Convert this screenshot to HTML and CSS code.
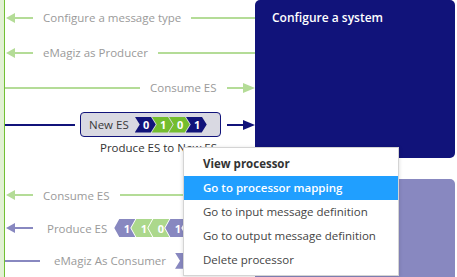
FILE: index.html
```html
<!DOCTYPE html>
<html>
<head>
<meta charset="utf-8">
<link rel="stylesheet" href="styles.css">
</head>
<body>
<div class="page">
  <div class="rail"></div>
  <div class="content">
    <div class="section top">
      <div class="lanes">
        <div class="row">
          <span class="head-left light"></span><span class="line short light-bg"></span>
          <span class="label">Configure a message type</span>
          <span class="line grow light-bg"></span>
        </div>
        <div class="row">
          <span class="head-left light"></span><span class="line short light-bg"></span>
          <span class="label">eMagiz as Producer</span>
          <span class="line grow light-bg"></span>
        </div>
        <div class="row">
          <span class="line w135 light-bg"></span>
          <span class="label">Consume ES</span>
          <span class="line grow light-bg"></span><span class="head-right light"></span>
        </div>
        <div class="row row-es">
          <span class="line w70 navy-bg"></span>
          <div class="es-box">
            <span class="es-name">New ES</span>
            <div class="chevrons">
              <span class="chev navy-bg">0</span>
              <span class="chev green-bg">1</span>
              <span class="chev green-bg">0</span>
              <span class="chev navy-bg last">1</span>
            </div>
          </div>
          <span class="line grow navy-bg gapl"></span><span class="head-right navy"></span>
        </div>
        <div class="caption">Produce ES to New ES</div>
      </div>
      <div class="system navy-box">Configure a system</div>
    </div>
    <div class="section bottom">
      <div class="lanes">
        <div class="row">
          <span class="head-left light"></span><span class="line short light-bg"></span>
          <span class="label">Consume ES</span>
          <span class="line grow light-bg"></span>
        </div>
        <div class="row">
          <span class="head-left purple"></span><span class="line short purple-bg"></span>
          <span class="label wide">Produce ES</span>
          <div class="chevrons rev">
            <span class="rchev purple-bg">1</span>
            <span class="rchev lgreen-bg">1</span>
            <span class="rchev lgreen-bg">0</span>
            <span class="rchev purple-bg">1</span>
          </div>
        </div>
        <div class="row">
          <span class="line w35 purple-bg"></span>
          <span class="label wide">eMagiz As Consumer</span>
          <span class="chev purple-bg solo">1</span>
        </div>
      </div>
      <div class="system purple-box"></div>
    </div>
  </div>
  <ul class="menu">
    <li class="title">View processor</li>
    <li class="active">Go to processor mapping</li>
    <li>Go to input message definition</li>
    <li>Go to output message definition</li>
    <li>Delete processor</li>
  </ul>
</div>
</body>
</html>
```
FILE: styles.css
```css
html, body {
  margin: 0;
  padding: 0;
  background: #fff;
}
body {
  width: 457px;
  height: 277px;
  overflow: hidden;
  font-family: "Open Sans", "Noto Sans", sans-serif;
  font-size: 11.5px;
}
.page {
  position: relative;
  display: flex;
  height: 277px;
}
.rail {
  width: 4px;
  background: #e2f1d4;
  border-right: 1px solid #72c034;
  flex: none;
}
.content {
  display: flex;
  flex-direction: column;
  width: 452px;
}
.section {
  display: flex;
}
.section.top {
  height: 158px;
}
.section.bottom {
  margin-top: 21px;
  height: 98px;
}
.lanes {
  width: 250px;
  display: flex;
  flex-direction: column;
}
.system {
  width: 200px;
  border-radius: 5px;
}
.navy-box {
  background: #11137a;
  color: #fff;
  padding: 9px 17px;
  box-sizing: border-box;
  font-size: 12px;
  font-weight: 600;
}
.purple-box {
  background: #8888c0;
  border-radius: 5px 5px 0 0;
  height: 100px;
}
.row {
  height: 35px;
  display: flex;
  align-items: center;
}
.row-es {
  height: 37px;
  margin-top: 1px;
}
.line {
  height: 2px;
  flex: none;
}
.line.short { width: 18px; }
.line.w135 { width: 135px; }
.line.w70 { width: 70px; }
.line.w35 { width: 35px; }
.line.grow { flex: 1; }
.line.gapl { margin-left: 6px; }
.light-bg { background: #b4dc97; }
.navy-bg { background: #11137a; }
.purple-bg { background: #8888c0; }
.green-bg { background: #74bd2e; }
.lgreen-bg { background: #acd88c; }
.head-left {
  width: 0;
  height: 0;
  margin-left: 1px;
  border-top: 5px solid transparent;
  border-bottom: 5px solid transparent;
  border-right: 9px solid;
}
.head-right {
  width: 0;
  height: 0;
  border-top: 5.5px solid transparent;
  border-bottom: 5.5px solid transparent;
  border-left: 12px solid;
}
.light { color: #b4dc97; }
.navy { color: #11137a; }
.purple { color: #8888c0; }
.label {
  color: #9a9a9a;
  margin: 0 10px;
  white-space: nowrap;
}
.label.wide {
  margin: 0 7px 0 14px;
}
.es-box {
  margin-left: 5px;
  width: 141px;
  height: 25px;
  box-sizing: border-box;
  border: 1px solid #11137a;
  border-radius: 4px;
  background: #d9d9e2;
  display: flex;
  align-items: center;
  padding-left: 8px;
}
.es-name {
  color: #3a3a3a;
  margin-right: 6px;
}
.chevrons {
  display: flex;
}
.chev, .rchev {
  height: 16px;
  width: 21px;
  color: #fff;
  font-weight: 700;
  font-size: 11px;
  display: flex;
  align-items: center;
  justify-content: center;
  margin-right: -4px;
  padding-left: 2px;
  box-sizing: border-box;
  clip-path: polygon(0 0, calc(100% - 5px) 0, 100% 50%, calc(100% - 5px) 100%, 0 100%, 5px 50%);
}
.chev.last { margin-right: 0; }
.rchev {
  height: 18px;
  padding-left: 4px;
  padding-right: 0;
  clip-path: polygon(5px 0, 100% 0, calc(100% - 5px) 50%, 100% 100%, 5px 100%, 0 50%);
}
.chev.solo {
  margin-left: 2px;
}
.caption {
  color: #333;
  padding-left: 95px;
  margin-top: -3px;
  font-size: 11.5px;
}
.menu {
  position: absolute;
  left: 183px;
  top: 147px;
  width: 216px;
  margin: 0;
  padding: 4px 0 3px;
  list-style: none;
  background: #fff;
  border: 1px solid #d4d4d4;
  box-shadow: 0 1px 4px rgba(0,0,0,0.15);
  box-sizing: border-box;
  color: #444;
  font-size: 11.5px;
}
.menu li {
  height: 24px;
  line-height: 24px;
  padding-left: 19px;
  white-space: nowrap;
}
.menu li.title {
  font-weight: 700;
  color: #333;
}
.menu li.active {
  background: #209fff;
  color: #fff;
  font-weight: 600;
}
```
